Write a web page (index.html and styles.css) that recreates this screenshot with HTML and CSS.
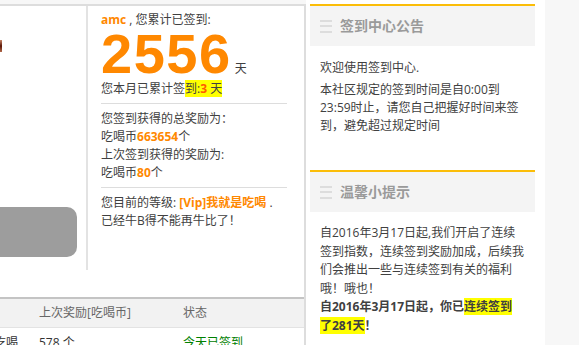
FILE: index.html
```html
<!DOCTYPE html>
<html lang="zh-CN">
<head>
  <meta charset="UTF-8" />
  <title>签到中心</title>
  <link rel="stylesheet" href="styles.css">
</head>
<body>

  <div class="page">
    <!-- Left: sign-in summary + records -->
    <div class="main">
      <div class="profile">
        <div class="avatar-col">
          <div class="avatar"></div>
          <div class="sign-btn"></div>
        </div>
        <div class="info">
          <p><b class="orange">amc</b> , 您累计已签到:</p>
          <p class="total"><span class="big">2556</span><span class="unit"> 天</span></p>
          <p class="month">您本月已累计签<mark>到:<b class="red">3</b> 天</mark></p>
          <hr>
          <p>您签到获得的总奖励为：</p>
          <p>吃喝币<b class="orange">663654</b>个</p>
          <p>上次签到获得的奖励为:</p>
          <p>吃喝币<b class="orange">80</b>个</p>
          <hr>
          <p>您目前的等级: <b class="orange">[Vip]我就是吃喝</b> .</p>
          <p>已经牛B得不能再牛比了！</p>
        </div>
      </div>

      <table class="records">
        <colgroup>
          <col class="c-name">
          <col class="c-reward">
          <col class="c-state">
        </colgroup>
        <tr>
          <th></th>
          <th>上次奖励[吃喝币]</th>
          <th>状态</th>
        </tr>
        <tr>
          <td class="name">吃喝</td>
          <td>578 个</td>
          <td class="done">今天已签到</td>
        </tr>
      </table>
    </div>

    <!-- Right: notice boxes -->
    <div class="side">
      <div class="box">
        <h3 class="box-head"><span class="menu-icon"><i></i><i></i><i></i></span>签到中心公告</h3>
        <div class="box-body">
          <p class="para">欢迎使用签到中心.</p>
          <p>本社区规定的签到时间是自0:00到23:59时止，请您自己把握好时间来签到，避免超过规定时间</p>
        </div>
      </div>

      <div class="box">
        <h3 class="box-head"><span class="menu-icon"><i></i><i></i><i></i></span>温馨小提示</h3>
        <div class="box-body tips">
          <p>自2016年3月17日起,我们开启了连续签到指数，连续签到奖励加成，后续我们会推出一些与连续签到有关的福利哦！哦也！</p>
          <p><b>自2016年3月17日起，你已<mark>连续签到了281天</mark>！</b></p>
        </div>
      </div>
    </div>
  </div>

</body>
</html>
```

FILE: styles.css
```css
/* ----- Base ----- */
html, body {
  margin: 0;
  height: 100%;
  overflow: hidden;
  background: #f7f7f7;
}
body {
  font: 12px/18px "Open Sans", "Noto Sans CJK SC", sans-serif;
  color: #404040;
}
p {
  margin: 0;
}
mark {
  background: #ff0;
  color: inherit;
}
.orange {
  color: #ff8800;
}
.red {
  color: #ff5a00;
}

.page {
  display: flex;
  width: 545px;
  height: 345px;
  overflow: hidden;
}

/* ----- Left panel ----- */
.main {
  width: 304px;
  margin-top: 4px;
  border-top: 2px solid #dddddd;
  border-right: 2px solid #dddddd;
  background: #fff;
}
.profile {
  display: flex;
  height: 264px;
}
.avatar-col {
  width: 86px;
  display: flex;
  flex-direction: column;
  border-right: 2px solid #e3e3e3;
}
.avatar {
  width: 2px;
  height: 12px;
  margin-top: 34px;
  background: linear-gradient(#c9876a, #5a1606 50%, #b36a4c);
}
.sign-btn {
  width: 77px;
  height: 50px;
  margin-top: auto;
  margin-bottom: 13px;
  border-radius: 0 10px 10px 0;
  background: #9d9d9d;
}

.info {
  flex: 1;
  padding: 5px 17px 0 13px;
}
.total {
  font: bold 56px/49px "Liberation Sans", Arial, sans-serif;
  color: #ff8800;
}
.total .big {
  letter-spacing: 1.5px;
}
.total .unit {
  font: 12px "Open Sans", "Noto Sans CJK SC", sans-serif;
  color: #404040;
}
.month {
  margin-top: 2px;
}
.info hr {
  margin: 5px 0 6px;
  border: 0;
  border-top: 1px solid #dddddd;
}

/* records table */
.records {
  width: 304px;
  margin-top: 27px;
  border-collapse: collapse;
  table-layout: fixed;
  border-top: 2px solid #c4c4c4;
}
.c-name { width: 39px; }
.c-reward { width: 144px; }
.records th {
  height: 28px;
  padding: 0;
  text-align: left;
  font-weight: normal;
  color: #666;
  background: #f2f2f2;
  border-bottom: 1px solid #e3e3e3;
}
.records td {
  height: 30px;
  padding: 0;
  color: #333;
  white-space: nowrap;
}
.records td.name {
  text-indent: -6px;
}
.records td.done {
  color: #008000;
}

/* ----- Right sidebar ----- */
.side {
  width: 225px;
  padding: 4px 10px 0 4px;
  background: #fff;
}
.box {
  border-top: 2px solid #fbbd08;
  margin-bottom: 15px;
}
.box-head {
  display: flex;
  align-items: center;
  gap: 8px;
  height: 40px;
  margin: 0;
  padding-left: 10px;
  background: #f4f4f4;
  font-size: 14px;
  font-weight: bold;
  color: #9a9a9a;
}
.menu-icon {
  display: flex;
  flex-direction: column;
  gap: 3.5px;
  width: 12px;
}
.menu-icon i {
  height: 2px;
  background: #dddddd;
}
.box-body {
  padding: 13px 11px 20px 10px;
}
.box-body .para {
  margin-bottom: 4px;
}
.box-body.tips {
  padding-top: 12px;
  line-height: 18.5px;
}
```
